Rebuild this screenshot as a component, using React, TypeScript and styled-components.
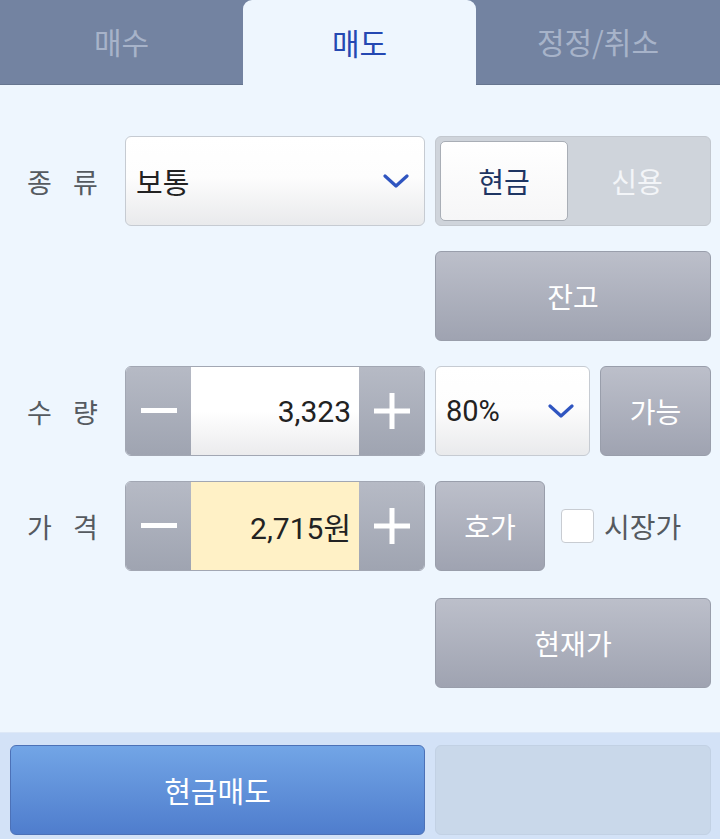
import React from 'react'
import styled, { createGlobalStyle } from 'styled-components'

const GlobalStyle = createGlobalStyle`
  html, body {
    margin: 0;
    padding: 0;
    background: #eef6fe;
  }
  * { box-sizing: border-box; }
  body {
    font-family: "Roboto", "Noto Sans CJK KR", sans-serif;
  }
`

const tabs = ['매수', '매도', '정정/취소']

function Chevron() {
  return (
    <svg width="26" height="16" viewBox="0 0 26 16">
      <path d="M2 3 L13 13 L24 3" fill="none" stroke="#2f55c0" strokeWidth="3.2" strokeLinecap="round" strokeLinejoin="round" />
    </svg>
  )
}

function Minus() {
  return (
    <svg width="36" height="36" viewBox="0 0 36 36">
      <rect x="0" y="15" width="36" height="5" fill="#fff" />
    </svg>
  )
}

function Plus() {
  return (
    <svg width="36" height="36" viewBox="0 0 36 36">
      <rect x="0" y="15.5" width="36" height="5" fill="#fff" />
      <rect x="15.5" y="0" width="5" height="36" fill="#fff" />
    </svg>
  )
}

function App() {
  return (
    <Page>
      <GlobalStyle />
      <TabBar>
        {tabs.map((t, i) => (
          <Tab key={t} active={i === 1}>{t}</Tab>
        ))}
      </TabBar>

      <Form>
        <Row>
          <Label>종 류</Label>
          <Select>
            <span>보통</span>
            <Chevron />
          </Select>
          <Right>
            <Toggle>
              <ToggleItem active>현금</ToggleItem>
              <ToggleItem>신용</ToggleItem>
            </Toggle>
          </Right>
        </Row>

        <Row>
          <Label />
          <Spacer />
          <Right>
            <GrayButton grow>잔고</GrayButton>
          </Right>
        </Row>

        <Row>
          <Label>수 량</Label>
          <Stepper>
            <StepBtn><Minus /></StepBtn>
            <StepValue>3,323</StepValue>
            <StepBtn><Plus /></StepBtn>
          </Stepper>
          <Right>
            <Select small>
              <span>80%</span>
              <Chevron />
            </Select>
            <GrayButton width={111}>가능</GrayButton>
          </Right>
        </Row>

        <Row gap={27}>
          <Label>가 격</Label>
          <Stepper>
            <StepBtn><Minus /></StepBtn>
            <StepValue yellow>2,715원</StepValue>
            <StepBtn><Plus /></StepBtn>
          </Stepper>
          <Right>
            <GrayButton width={110}>호가</GrayButton>
            <Check>
              <Box />
              <span>시장가</span>
            </Check>
          </Right>
        </Row>

        <Row gap={0}>
          <Label />
          <Spacer />
          <Right>
            <GrayButton grow>현재가</GrayButton>
          </Right>
        </Row>
      </Form>

      <BottomBar>
        <Primary>현금매도</Primary>
        <Disabled />
      </BottomBar>
    </Page>
  )
}

const Page = styled.div`
  width: 720px;
  height: 839px;
  background: #eef6fe;
  display: flex;
  flex-direction: column;
  overflow: hidden;
`

const TabBar = styled.div`
  display: grid;
  grid-template-columns: 243px 233px 1fr;
  height: 85px;
  background: #7383a1;
  border-bottom: 1px solid #66758f;
`

const Tab = styled.div<{ active?: boolean }>`
  display: flex;
  align-items: center;
  justify-content: center;
  font-family: "Noto Sans CJK KR", sans-serif;
  font-size: 30px;
  padding-bottom: 2px;
  color: ${p => (p.active ? '#2448b2' : '#a7b3c9')};
  background: ${p => (p.active ? '#eef6fe' : 'transparent')};
  border-radius: ${p => (p.active ? '9px 9px 0 0' : '0')};
  margin-bottom: ${p => (p.active ? '-1px' : '0')};
`

const Form = styled.div`
  flex: 1;
  padding: 51px 9px 0 27px;
  display: flex;
  flex-direction: column;
`

const Row = styled.div<{ gap?: number }>`
  display: flex;
  align-items: center;
  height: 90px;
  margin-bottom: ${p => (p.gap ?? 25)}px;
`

const Label = styled.div`
  width: 98px;
  flex: none;
  font-family: "Noto Sans CJK KR", sans-serif;
  font-size: 27px;
  color: #555a60;
  white-space: pre;
  word-spacing: 15px;
`

const Spacer = styled.div`
  width: 300px;
  flex: none;
`

const Right = styled.div`
  margin-left: 10px;
  width: 276px;
  height: 100%;
  display: flex;
  align-items: center;
  gap: 10px;
`

const Select = styled.div<{ small?: boolean }>`
  width: ${p => (p.small ? '155px' : '300px')};
  flex: none;
  height: 90px;
  border: 1px solid #c6cbd2;
  border-radius: 6px;
  background: linear-gradient(#ffffff 0%, #fdfdfd 45%, #e9eaec 100%);
  display: flex;
  align-items: center;
  justify-content: space-between;
  padding: 0 15px 0 10px;
  font-family: "Roboto", "Noto Sans CJK KR", sans-serif;
  font-size: 29px;
  color: #222;
`

const Toggle = styled.div`
  width: 276px;
  height: 90px;
  border-radius: 6px;
  background: #cfd4db;
  border: 1px solid #c3c8cf;
  padding: 4px;
  display: grid;
  grid-template-columns: 128px 1fr;
`

const ToggleItem = styled.div<{ active?: boolean }>`
  display: flex;
  align-items: center;
  justify-content: center;
  font-family: "Noto Sans CJK KR", sans-serif;
  font-size: 28px;
  border-radius: 5px;
  color: ${p => (p.active ? '#1e3563' : '#f3f5f8')};
  background: ${p => (p.active ? 'linear-gradient(#ffffff, #f6f6f7)' : 'transparent')};
  border: ${p => (p.active ? '1px solid #a9aeb6' : 'none')};
`

const GrayButton = styled.div<{ grow?: boolean; width?: number }>`
  ${p => (p.grow ? 'flex: 1;' : `width: ${p.width}px; flex: none;`)}
  height: 90px;
  border-radius: 6px;
  border: 1px solid #999eab;
  background: linear-gradient(#bcbfca, #9fa3b1);
  color: #fff;
  font-family: "Noto Sans CJK KR", sans-serif;
  font-size: 28px;
  display: flex;
  align-items: center;
  justify-content: center;
`

const Stepper = styled.div`
  width: 300px;
  flex: none;
  height: 90px;
  border-radius: 6px;
  border: 1px solid #a2a7b3;
  overflow: hidden;
  display: grid;
  grid-template-columns: 65px 1fr 65px;
`

const StepBtn = styled.div`
  display: flex;
  align-items: center;
  justify-content: center;
  background: linear-gradient(#b6bac5, #9fa4b1);
`

const StepValue = styled.div<{ yellow?: boolean }>`
  display: flex;
  align-items: center;
  justify-content: flex-end;
  padding-right: 8px;
  font-family: "Roboto", "Noto Sans CJK KR", sans-serif;
  font-size: 30px;
  color: #222;
  background: ${p => (p.yellow ? '#fff1c6' : 'linear-gradient(#ffffff 50%, #ebebed)')};
`

const Check = styled.div`
  display: flex;
  align-items: center;
  gap: 10px;
  margin-left: 6px;
  font-family: "Noto Sans CJK KR", sans-serif;
  font-size: 28px;
  color: #555a60;
`

const Box = styled.div`
  width: 33px;
  height: 34px;
  background: #fff;
  border: 1px solid #c8ccd2;
  border-radius: 4px;
`

const BottomBar = styled.div`
  height: 107px;
  background: #d3e2f7;
  border-top: 1px solid #dde8f7;
  padding: 12px 9px 4px 10px;
  display: grid;
  grid-template-columns: 415px 1fr;
  gap: 10px;
`

const Primary = styled.div`
  border-radius: 6px;
  border: 1px solid #4c71b7;
  background: linear-gradient(#72a5e6, #4f7dcd);
  color: #fff;
  font-family: "Noto Sans CJK KR", sans-serif;
  font-size: 29px;
  display: flex;
  align-items: center;
  justify-content: center;
`

const Disabled = styled.div`
  border-radius: 6px;
  border: 1px solid #c2d1e4;
  background: #c9d8ea;
`

export default App
